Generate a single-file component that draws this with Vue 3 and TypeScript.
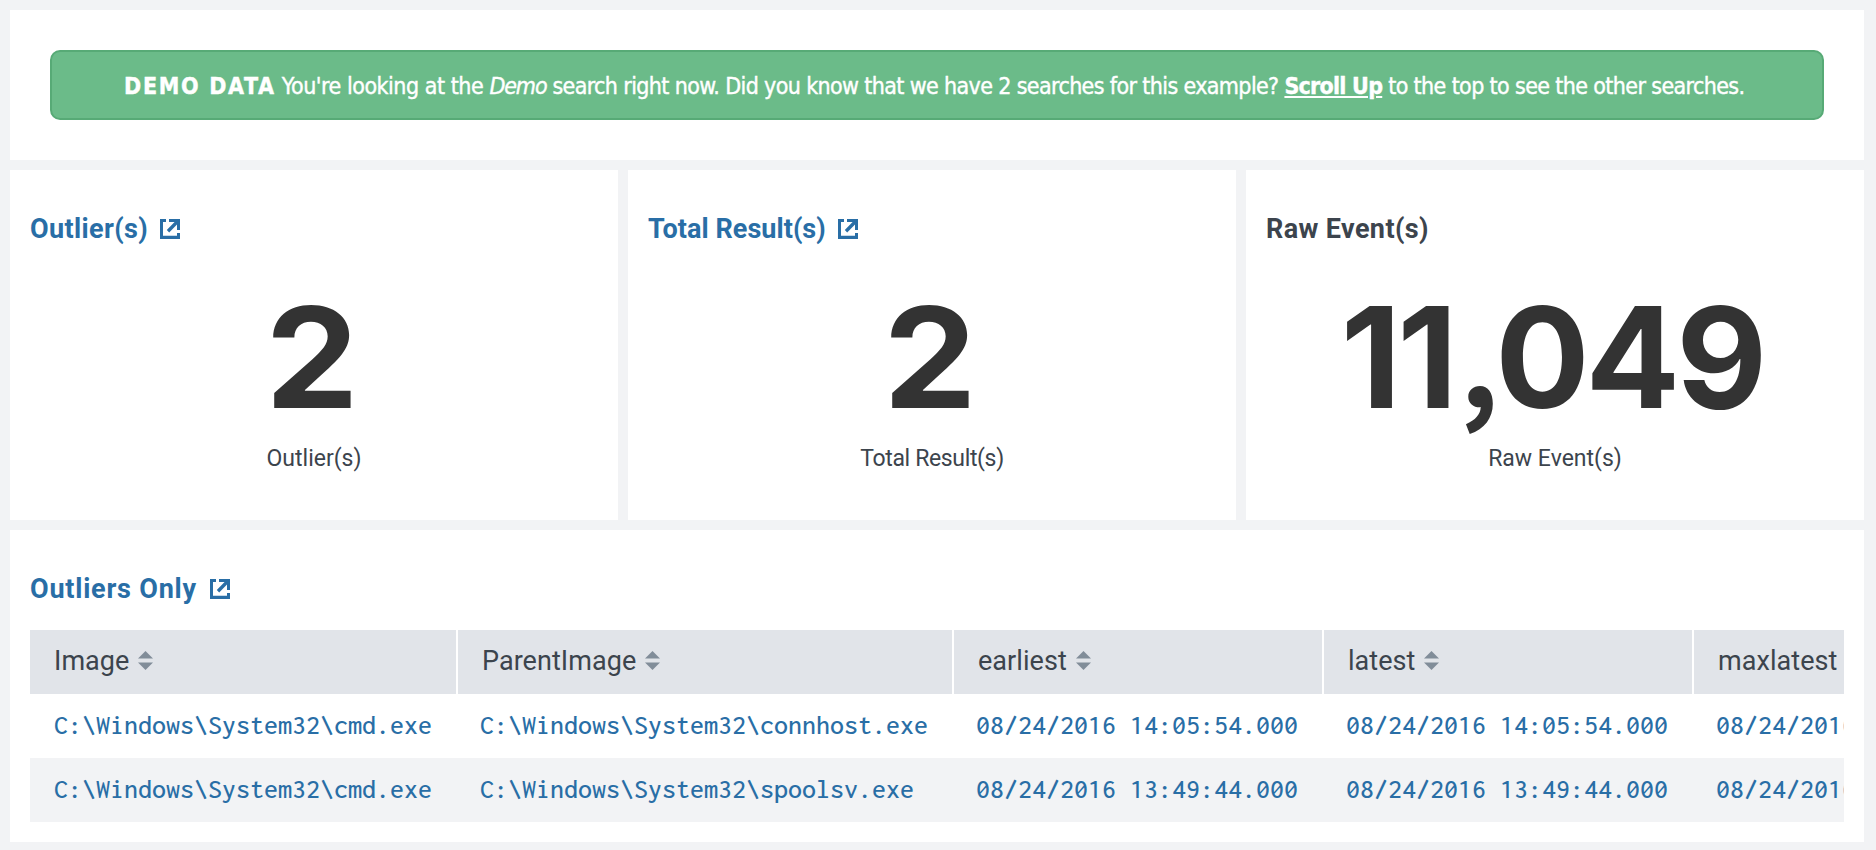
<script setup lang="ts">
interface Stat {
  title: string
  value: string
  linked: boolean
  tight?: boolean
}

const stats: Stat[] = [
  { title: 'Outlier(s)', value: '2', linked: true },
  { title: 'Total Result(s)', value: '2', linked: true, tight: true },
  { title: 'Raw Event(s)', value: '11,049', linked: false },
]

const columns: string[] = ['Image', 'ParentImage', 'earliest', 'latest', 'maxlatest']

const rows: string[][] = [
  [
    'C:\\Windows\\System32\\cmd.exe',
    'C:\\Windows\\System32\\connhost.exe',
    '08/24/2016 14:05:54.000',
    '08/24/2016 14:05:54.000',
    '08/24/2016 14:05:54.000',
  ],
  [
    'C:\\Windows\\System32\\cmd.exe',
    'C:\\Windows\\System32\\spoolsv.exe',
    '08/24/2016 13:49:44.000',
    '08/24/2016 13:49:44.000',
    '08/24/2016 13:49:44.000',
  ],
]
</script>

<template>
  <main class="dashboard">
    <section class="panel notice">
      <div class="alert">
        <strong class="tag">DEMO DATA</strong>
        <span class="lead"> You're looking at the </span><em>Demo</em> search right now. Did you know that we have 2 searches for this example?
        <a class="scroll">Scroll Up</a> to the top to see the other searches.
      </div>
    </section>

    <div class="stats">
      <section v-for="stat in stats" :key="stat.title" class="panel stat" :class="{ tight: stat.tight }">
        <h3 class="title" :class="{ linked: stat.linked }">
          <span>{{ stat.title }}</span>
          <svg v-if="stat.linked" class="external" viewBox="0 0 20 20">
            <path d="M0 0H6V3H3V16.8H17V14H20V20H0Z" />
            <path d="M9 0H20V11H17V5.6L9.2 13.4L6.8 11L14.6 3H9Z" />
          </svg>
        </h3>
        <div class="value" :class="{ long: stat.value.length > 1 }">
          <template v-for="(part, i) in stat.value.split(',')" :key="i"><span v-if="i > 0" class="comma">,</span>{{ part }}</template>
        </div>
        <div class="label">{{ stat.title }}</div>
      </section>
    </div>

    <section class="panel results">
      <h3 class="title linked wide">
        <span>Outliers Only</span>
        <svg class="external" viewBox="0 0 20 20">
          <path d="M0 0H6V3H3V16.8H17V14H20V20H0Z" />
          <path d="M9 0H20V11H17V5.6L9.2 13.4L6.8 11L14.6 3H9Z" />
        </svg>
      </h3>
      <div class="scroller">
        <table class="table">
          <colgroup>
            <col class="c-image" />
            <col class="c-parent" />
            <col class="c-time" />
            <col class="c-time" />
            <col class="c-time" />
          </colgroup>
          <thead>
            <tr>
              <th v-for="name in columns" :key="name">
                <span class="head">
                  {{ name }}
                  <svg class="sort" viewBox="0 0 15 19">
                    <path d="M7.5 0L15 7.5H0Z" />
                    <path d="M0 11.5H15L7.5 19Z" />
                  </svg>
                </span>
              </th>
            </tr>
          </thead>
          <tbody>
            <tr v-for="(row, r) in rows" :key="r">
              <td v-for="(cell, c) in row" :key="c">{{ cell }}</td>
            </tr>
          </tbody>
        </table>
      </div>
    </section>
  </main>
</template>

<style>
body {
  background: #f2f3f5;
}
</style>

<style scoped>
.dashboard {
  box-sizing: border-box;
  width: 1876px;
  height: 850px;
  padding: 10px 12px 8px 10px;
  display: flex;
  flex-direction: column;
  gap: 10px;
  overflow: hidden;
  background: #f2f3f5;
  color: #3c444d;
  font-family: Roboto, 'Liberation Sans', sans-serif;
}
.panel {
  box-sizing: border-box;
  background: #fff;
}
.notice {
  height: 150px;
  padding: 40px;
}
.alert {
  box-sizing: border-box;
  height: 70px;
  padding: 19px 0 0 72px;
  border: 2px solid #57aa76;
  border-radius: 10px;
  background: #6bbb89;
  color: #fff;
  font-family: 'DejaVu Sans Condensed', 'DejaVu Sans', sans-serif;
  font-size: 23px;
  line-height: 30px;
  letter-spacing: -0.63px;
  white-space: nowrap;
  -webkit-text-stroke: 0.4px #fff;
}
.lead {
  letter-spacing: -0.47px;
}
.alert em {
  letter-spacing: -1.1px;
}
.tag {
  letter-spacing: 1.7px;
}
.scroll {
  font-weight: 700;
  text-decoration: underline;
  letter-spacing: -0.75px;
}
.stats {
  display: grid;
  grid-template-columns: 608px 608px 618px;
  gap: 10px;
}
.stat {
  height: 350px;
  padding: 43px 20px 0;
}
.title {
  margin: 0;
  display: flex;
  align-items: center;
  gap: 12px;
  font-size: 27px;
  line-height: 32px;
  font-weight: 700;
  letter-spacing: 0.38px;
}
.tight .title {
  letter-spacing: 0.05px;
}
.wide {
  gap: 13px;
  letter-spacing: 0.78px;
}
.linked {
  color: #296ea6;
}
.external {
  width: 20px;
  height: 20px;
  margin-bottom: 1px;
  fill: currentColor;
}
.value {
  margin: 42px 4px 0 0;
  color: #333;
  font-family: Inter, 'Liberation Sans', sans-serif;
  font-size: 140px;
  line-height: 140px;
  font-weight: 700;
  text-align: center;
  transform: scaleX(1.06);
}
.long {
  margin-right: 6px;
  letter-spacing: -4px;
  transform: none;
}
.comma {
  margin-left: 6px;
  font-family: 'Noto Sans CJK SC', sans-serif;
  font-size: 122px;
  line-height: 0;
}
.label {
  margin-top: 18px;
  font-size: 23px;
  line-height: 28px;
  text-align: center;
}
.tight .label {
  letter-spacing: -0.35px;
}
.results {
  height: 312px;
  padding: 43px 20px 0;
}
.scroller {
  margin-top: 25px;
  overflow: hidden;
}
.table {
  width: 2032px;
  table-layout: fixed;
  border-collapse: separate;
  border-spacing: 0;
}
.c-image {
  width: 426px;
}
.c-parent {
  width: 496px;
}
.c-time {
  width: 370px;
}
th {
  height: 62px;
  padding: 0 0 2px 24px;
  border-left: 2px solid #fff;
  background: #e1e4e9;
  font-size: 27px;
  line-height: 62px;
  font-weight: 400;
  text-align: left;
}
th:first-child {
  border-left: 0;
}
.head {
  display: flex;
  align-items: center;
  gap: 9px;
  letter-spacing: 0.05px;
}
.sort {
  width: 15px;
  height: 19px;
  margin-top: -2px;
  fill: #818d99;
}
td {
  height: 62px;
  padding: 0 0 2px 24px;
  color: #296ea6;
  font-family: Inconsolata, 'DejaVu Sans Mono', monospace;
  font-size: 28px;
  font-weight: 500;
  line-height: 62px;
  white-space: pre;
}
tbody tr:nth-child(even) td {
  background: #f2f3f5;
}
</style>
